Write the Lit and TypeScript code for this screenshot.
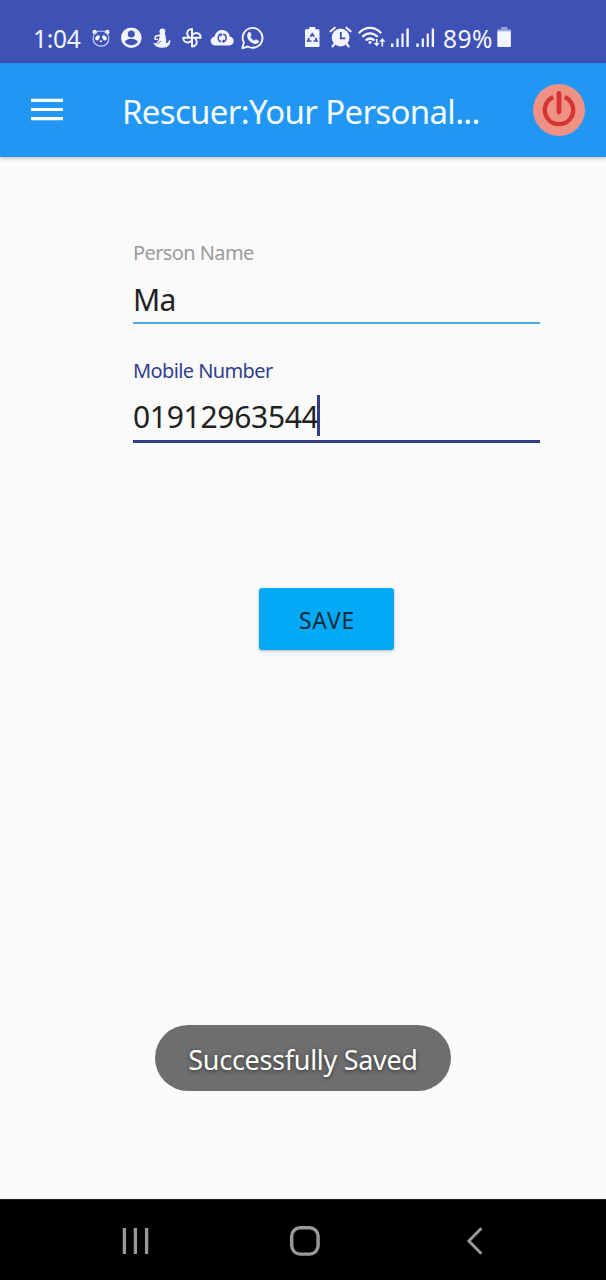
import { LitElement, html, css, svg } from "lit";
import { customElement, property } from "lit/decorators.js";

/* Status glyphs share one vertical band (24..52) and tile horizontally. */
const icon = (x: number, width: number, body: unknown) => html`
  <svg width=${width} height="28" viewBox="${x} 24 ${width} 28" aria-hidden="true">${body}</svg>
`;

const panda = svg`
  <circle cx="94.7" cy="32" r="2.3" fill="#eef0ff"/><circle cx="107.3" cy="32" r="2.3" fill="#eef0ff"/>
  <path d="M101 31c4.6 0 7.9 3.2 7.9 7.2 0 4.8-3.4 8-7.9 8s-7.9-3.2-7.9-8c0-4 3.300-7.200 7.900-7.200z" fill="none" stroke="#c5cbf5" stroke-width="1.200"/>
  <ellipse cx="97.500" cy="37.800" rx="1.900" ry="2.800" transform="rotate(35 97.500 37.800)" fill="#fff"/>
  <ellipse cx="104.500" cy="37.800" rx="1.900" ry="2.800" transform="rotate(-35 104.500 37.800)" fill="#fff"/>
  <path d="M99.300 40.500h3.400l-1.700 2z" fill="#fff"/>`;

const person = svg`
  <circle cx="131.300" cy="37.700" r="10.300" fill="#f3f5ff"/>
  <circle cx="131.300" cy="34" r="3.500" fill="#3f51b5"/>
  <path d="M124.700 41.800c1.200-2.200 4-3.100 6.600-3.100s5.400.9 6.600 3.100c-1.500 2.200-3.900 3.400-6.600 3.400s-5.100-1.200-6.600-3.400z" fill="#3f51b5"/>`;

const figure = svg`
  <circle cx="162.400" cy="31.300" r="2.900" fill="#f3f5ff"/>
  <path d="M160 33.200l5 .3 1.200 7-.4 2.600 2.500-.7.700-2.500 1.500.8c0 3.600-2.300 7-7.600 7-4.500 0-8-1.200-9.500-4.700l3.100.2 2.600-3.700z" fill="#f3f5ff"/>
  <path d="M160 35.200l-4.500 1-.500 3 3.300.400" fill="none" stroke="#f3f5ff" stroke-width="1.500"/>
  <path d="M157.500 44l3.500-3" stroke="#3f51b5" stroke-width=".8"/>`;

const blade = "M192 37.700V29c-2.800 0-4.800 1.900-4.800 4.300 0 1.800 1 3.400 2.300 4.400";
const pinwheel = svg`
  <g fill="none" stroke="#f3f5ff" stroke-width="2" stroke-linejoin="round">
    ${[0, 90, 180, 270].map((a) => svg`<path d=${blade} transform="rotate(${a} 192 37.700)"/>`)}
  </g>`;

const cloud = svg`
  <path d="M216 45.500c-3.200 0-5.300-1.900-5.300-4.600 0-2.400 1.700-4.200 4-4.500.6-3.700 3.600-6.400 7.500-6.400 3.800 0 6.900 2.700 7.500 6.400 2.400.3 4 2.100 4 4.500 0 2.700-2.100 4.600-5.200 4.600z" fill="#f3f5ff"/>
  <g fill="none" stroke="#3f51b5" stroke-width="1.400"><path d="M221.200 34.300c-4 .6-4 6.800 0 7.400M223.200 34.300c4 .6 4 6.800 0 7.400"/></g>
  <path d="M220.300 32.800l2.400 1.900-2.400 2zM224.100 43.200l-2.400-1.900 2.400-2z" fill="#3f51b5"/>`;

const chat = svg`
  <path d="M242.300 48.300l1.600-5.700a9.900 9.900 0 1 1 3.900 3.900z" fill="none" stroke="#f3f5ff" stroke-width="1.900" stroke-linejoin="round"/>
  <path d="M248.600 32.300c.6-.5 1.500-.5 1.800.1l1.100 2.500c.2.600-.7 1.500-1.100 2 .9 1.800 2.300 3 4.100 3.800.5-.5 1.200-1.600 1.800-1.300l2.500 1.300c.500.300.300 1.300-.200 1.900-1.600 2-4.400 1.500-6.800.1-2.300-1.300-3.700-3-4.400-5.200-.6-2 .1-4.200 1.200-5.200z" fill="#f3f5ff"/>`;

const recycle = svg`
  <path d="M309.300 27h6v2.300h3.300c.5 0 .9.400.9.900v16c0 .5-.4.900-.9.900h-12.700c-.5 0-.9-.4-.9-.9v-16c0-.5.4-.9.900-.9h3.400z" fill="#f3f5ff"/>
  <path d="M310.400 36.800l1.900-3 1.900 3M315.500 38l1.500 3h-3.500M311.500 41h-3.800l1.600-3" fill="none" stroke="#3f51b5" stroke-width="1.700"/>`;

const alarm = svg`
  <circle cx="340.600" cy="37.500" r="8.900" fill="#f3f5ff"/>
  <path d="M330.600 31.300l4.200-3.600M350.600 31.300l-4.200-3.600M334.800 43.500l-2.300 3M346.400 43.500l2.300 3" stroke="#f3f5ff" stroke-width="2.100" stroke-linecap="round"/>
  <path d="M340.800 32v6.300h4.600" fill="none" stroke="#3f51b5" stroke-width="1.800"/>`;

const wifi = svg`
  <g fill="none" stroke="#f3f5ff" stroke-width="2.200">
    <path d="M358.800 33.200c6.400-7 16-7 22.400 0M362.300 36.900c4.700-4.700 10.700-4.700 15.400 0M365.700 40.400c2.700-2.400 5.900-2.400 8.600 0"/>
    <path d="M376.700 39v5M382.300 41.500v5" stroke-width="1.700"/>
  </g>
  <circle cx="370" cy="42.300" r="1.600" fill="#f3f5ff"/>
  <path d="M373.700 43h6l-3 3.600zM379.300 41.700h6l-3-3.600z" fill="#f3f5ff"/>`;

const bars = (x: number) => svg`
  <g fill="#f3f5ff" transform="translate(${x} 0)">
    <rect y="43.500" width="2.500" height="3.500"/><rect x="5.400" y="38.500" width="2.200" height="8.500"/>
    <rect x="10.400" y="33.500" width="2.200" height="13.500"/><rect x="15.400" y="28.500" width="2.400" height="18.500"/>
  </g>`;

const battery = svg`
  <path d="M501 29.500v-1.600c0-.5.400-.9.900-.9h4.600c.5 0 .9.400.9.900v1.600z" fill="#9ca6dd"/>
  <rect x="497.300" y="29.500" width="13.600" height="2" fill="#aab3e3"/>
  <path d="M497.300 31.300h13.600v14.800c0 .5-.4.900-.9.900h-11.800c-.5 0-.9-.4-.9-.9z" fill="#f3f5ff"/>`;

@customElement("status-bar")
class StatusBar extends LitElement {
  static styles = css`
    :host { display: flex; box-sizing: border-box; height: 63px; padding: 24px 0 0 33px; background: #3f51b5; color: #f3f5ff; font: 24.500px/30px "Noto Sans", sans-serif; }
    svg { display: block; flex: none; }
    .time { width: 55px; letter-spacing: -0.300px; }
    .level { width: 52px; letter-spacing: 0.500px; }
  `;
  render() {
    return html`<span class="time">1:04</span>${icon(88, 28, panda)}${icon(116, 32, person)}${icon(148, 28, figure)}${icon(176, 31, pinwheel)}${icon(207, 31, cloud)}${icon(238, 62, chat)}${icon(300, 25, recycle)}${icon(325, 31, alarm)}${icon(356, 32, wifi)}${icon(388, 25, bars(391))}${icon(413, 30, bars(416.3))}<span class="level">89%</span>${icon(495, 20, battery)}`;
  }
}

@customElement("app-header")
class AppHeader extends LitElement {
  static styles = css`
    :host { display: flex; align-items: center; box-sizing: border-box; height: 94px; padding: 0 20px 0 31px; background: #2196f3; box-shadow: 0 1px 4px rgba(0, 0, 0, 0.280); }
    svg { display: block; flex: none; }
    .title { flex: 1; margin: 4px 0 0; padding-left: 59px; color: #f5fbff; font: 400 33px/48px "Noto Sans", sans-serif; letter-spacing: -0.670px; white-space: nowrap; }
  `;
  render() {
    return html`
      <svg width="32" height="24" viewBox="0 0 32 24"><path d="M0 2.300h32M0 11.500h32M0 20.700h32" stroke="#fff" stroke-width="3.200"/></svg>
      <h1 class="title">Rescuer:Your Personal...</h1>
      <svg width="54" height="54" viewBox="0 0 54 54">
        <circle cx="27" cy="27" r="26" fill="#ef9184"/>
        <path d="M21.300 14a14.200 14.200 0 1 0 11.400 0" fill="none" stroke="#d63333" stroke-width="4.300"/>
        <path d="M27 10.500v18.500" stroke="#d63333" stroke-width="4.800" stroke-linecap="round"/>
      </svg>`;
  }
}

@customElement("text-field")
class TextField extends LitElement {
  @property() label = "";
  @property() value = "";
  @property({ type: Boolean, reflect: true }) active = false;
  static styles = css`
    :host { display: block; box-sizing: border-box; height: 118px; font-family: "Noto Sans", sans-serif; }
    .label { color: #9b9b9b; font-size: 20px; line-height: 26px; letter-spacing: -0.600px; }
    .row { display: flex; align-items: center; height: 43px; margin-top: 15px; padding-bottom: 4px; border-bottom: 2px solid #4fa9de; box-sizing: border-box; }
    .value { color: #212121; font-size: 30px; line-height: 40px; letter-spacing: -0.800px; }
    .caret { width: 3px; height: 41px; margin-left: -1px; background: #303f83; flex: none; }
    :host([active]) .row { height: 48px; margin-top: 11px; padding-bottom: 4px; border-bottom: 3px solid #303f83; }
    :host([active]) .label { color: #303f8c; }
    :host([active]) .value { padding-top: 3px; letter-spacing: -0.300px; }
  `;
  render() {
    return html`<div class="label">${this.label}</div>
      <div class="row"><span class="value">${this.value}</span>${this.active ? html`<span class="caret"></span>` : null}</div>`;
  }
}

@customElement("nav-bar")
class NavBar extends LitElement {
  static styles = css`
    :host { display: flex; align-items: center; box-sizing: border-box; height: 81px; padding: 2px 0 0 121px; border-top: 1px solid #1c1c1c; background: #000; }
    svg { display: block; }
    .home { margin: 0 145px 0 139px; }
  `;
  render() {
    return html`
      <svg width="29" height="32" viewBox="0 0 29 32"><path d="M3.400 3v26M14.400 3v26M25.600 3v26" stroke="#999" stroke-width="3.300"/></svg>
      <svg class="home" width="32" height="32" viewBox="0 0 32 32"><rect x="2.700" y="2.700" width="26.400" height="26.400" rx="8.500" fill="none" stroke="#999" stroke-width="3.400"/></svg>
      <svg width="18" height="32" viewBox="0 0 18 32"><path d="M15.400 3.200L2.900 16l12.500 12.800" fill="none" stroke="#999" stroke-width="3"/></svg>`;
  }
}

@customElement("app-root")
class AppRoot extends LitElement {
  static styles = css`
    :host { display: flex; flex-direction: column; width: 606px; height: 1280px; overflow: hidden; background: #fafafa; font-family: "Noto Sans", sans-serif; }
    .content { flex: 1; display: flex; flex-direction: column; padding-top: 83px; }
    .fields { width: 407px; margin-left: 133px; }
    .save { align-self: flex-start; width: 135px; height: 62px; margin: 112px 0 0 259px; padding: 1px 0 0 1px; border: 0; border-radius: 3px; background: #03a9f4; box-shadow: 0 1px 3px rgba(0, 0, 0, 0.280); color: #122b3b; font: 400 23px/30px "Noto Sans", sans-serif; letter-spacing: 0.800px; }
    .toast { align-self: center; box-sizing: border-box; width: 296px; height: 66px; margin: auto 0 108px; padding-top: 3px; border-radius: 33px; background: #6e6e6e; color: #fff; font-size: 27px; line-height: 64px; letter-spacing: -0.300px; text-align: center; white-space: nowrap; text-shadow: 0 1px 4px rgba(0, 0, 0, 0.600); }
  `;
  render() {
    return html`
      <status-bar></status-bar>
      <app-header></app-header>
      <main class="content">
        <div class="fields">
          <text-field label="Person Name" value="Ma"></text-field>
          <text-field label="Mobile Number" value="01912963544" active></text-field>
        </div>
        <button class="save">SAVE</button>
        <div class="toast" role="status">Successfully Saved</div>
      </main>
      <nav-bar></nav-bar>`;
  }
}
